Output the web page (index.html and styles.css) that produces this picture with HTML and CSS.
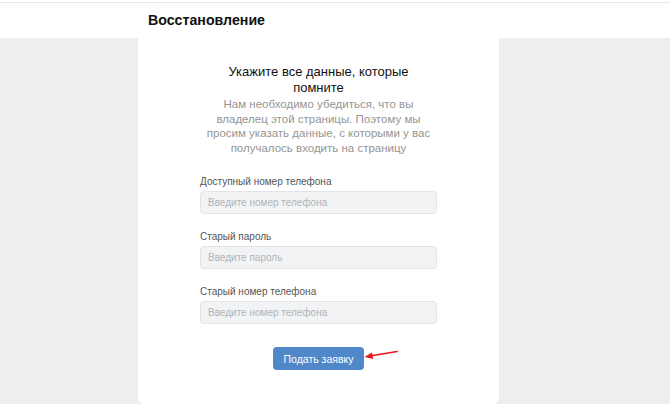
FILE: index.html
```html
<!DOCTYPE html>
<html lang="ru">
<head>
<meta charset="utf-8">
<link rel="stylesheet" href="styles.css">
</head>
<body>
<div class="page">
  <header class="topbar">
    <h1 class="title">Восстановление</h1>
  </header>
  <main class="main">
    <section class="card">
      <h2 class="heading">Укажите все данные, которые<br>помните</h2>
      <p class="desc">Нам необходимо убедиться, что вы<br>владелец этой страницы. Поэтому мы<br>просим указать данные, с которыми у вас<br>получалось входить на страницу</p>
      <form class="form">
        <label class="field">
          <span class="label">Доступный номер телефона</span>
          <span class="input">Введите номер телефона</span>
        </label>
        <label class="field">
          <span class="label">Старый пароль</span>
          <span class="input">Введите пароль</span>
        </label>
        <label class="field">
          <span class="label">Старый номер телефона</span>
          <span class="input">Введите номер телефона</span>
        </label>
        <div class="actions">
          <span class="button">Подать заявку</span>
          <svg class="arrow" width="34" height="10" viewBox="0 0 34 10">
            <line x1="33" y1="1.5" x2="6" y2="6" stroke="#e8141b" stroke-width="1.6" stroke-linecap="round"/>
            <path d="M0.5 7 L8 2.6 L9.2 9 Z" fill="#e8141b"/>
          </svg>
        </div>
      </form>
    </section>
  </main>
</div>
</body>
</html>
```

FILE: styles.css
```css
* { box-sizing: border-box; }
html, body { margin: 0; padding: 0; }
body {
  font-family: "Liberation Sans", Arial, sans-serif;
  background: #ffffff;
}
.page {
  width: 670px;
  height: 404px;
  display: flex;
  flex-direction: column;
  overflow: hidden;
}
.topbar {
  height: 36px;
  margin-top: 2px;
  border-top: 1px solid #e6e7ea;
  background: #fff;
  padding-left: 148px;
  display: flex;
  align-items: center;
}
.title {
  margin: 0;
  font-size: 14.2px;
  font-weight: bold;
  color: #111;
  padding-bottom: 2px;
}
.main {
  flex: 1;
  background: #edeef0;
  padding-left: 138px;
}
.card {
  width: 361px;
  height: 100%;
  background: #fff;
  border-radius: 0 0 6px 6px;
  padding-top: 26px;
  display: flex;
  flex-direction: column;
  align-items: center;
}
.heading {
  margin: 0;
  font-size: 13px;
  font-weight: normal;
  line-height: 16px;
  color: #111;
  text-align: center;
}
.desc {
  margin: 1px 0 0;
  font-size: 11.5px;
  line-height: 14.6px;
  color: #959595;
  text-align: center;
}
.form {
  margin-top: 21px;
  width: 237px;
  display: flex;
  flex-direction: column;
}
.field {
  display: flex;
  flex-direction: column;
  margin-bottom: 9px;
}
.label {
  font-size: 10px;
  line-height: 12px;
  color: #555;
  margin-bottom: 3px;
}
.input {
  height: 23px;
  border: 1px solid #e3e4e8;
  border-radius: 4px;
  background: #f2f3f5;
  font-size: 10px;
  color: #b1b3b8;
  padding-left: 7px;
  display: flex;
  align-items: center;
}
.field + .field { margin-top: 8px; }
.actions {
  margin-top: 14px;
  position: relative;
  display: flex;
  justify-content: center;
}
.button {
  width: 91px;
  height: 23px;
  border-radius: 4px;
  background: #4f87c8;
  color: #fff;
  font-size: 10.5px;
  display: flex;
  align-items: center;
  justify-content: center;
}
.arrow {
  position: absolute;
  left: 164px;
  top: 3px;
}
```
